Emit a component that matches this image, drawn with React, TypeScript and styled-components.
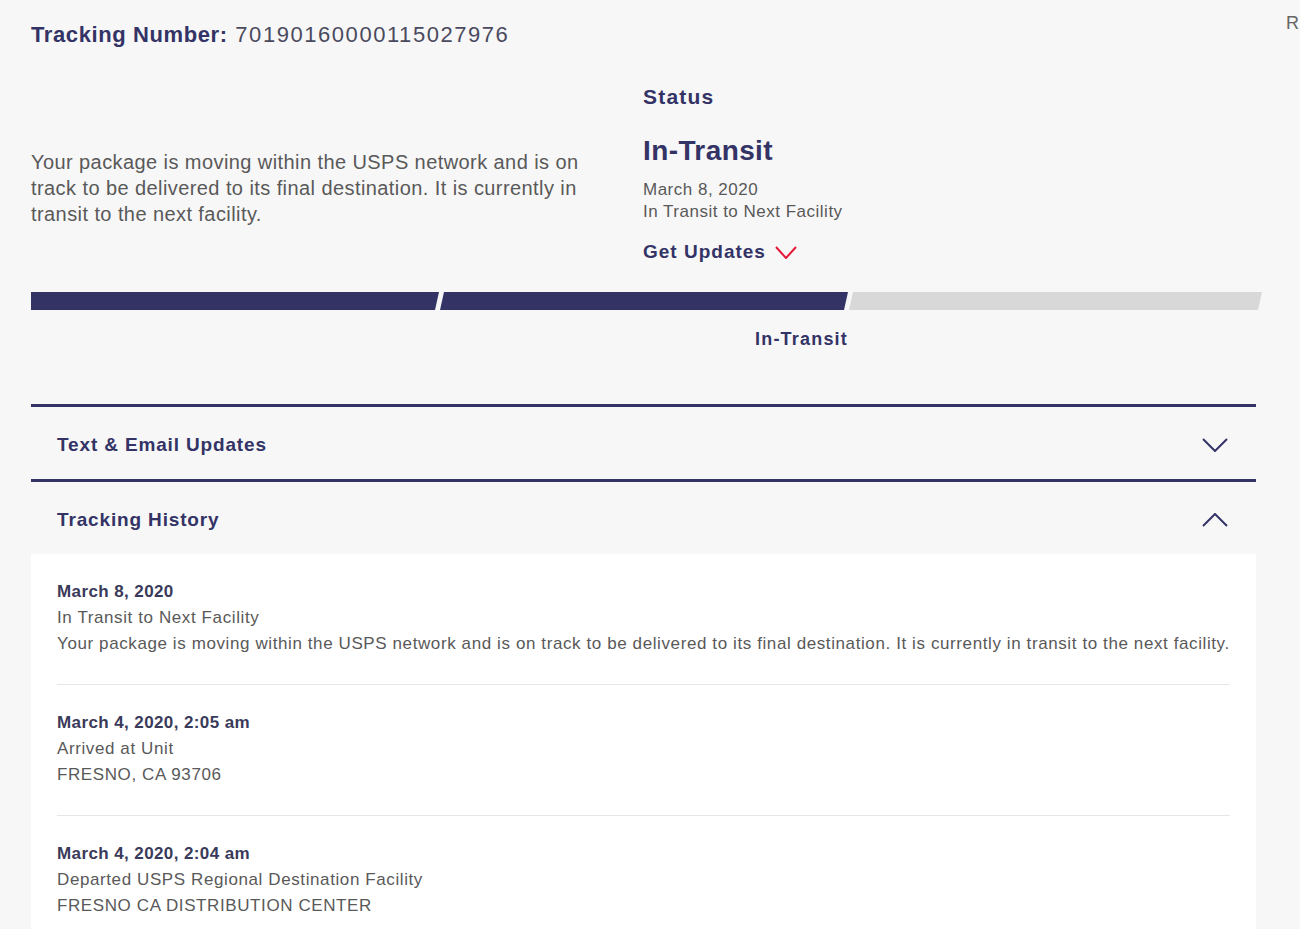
import React from "react";
import styled, { createGlobalStyle } from "styled-components";

const Global = createGlobalStyle`
  html, body { margin: 0; padding: 0; background: #f7f7f7; overflow: hidden; }
  body { font-family: "Liberation Sans", Arial, sans-serif; color: #595959; }
  * { box-sizing: border-box; }
`;

const NAVY = "#333366";

const Page = styled.div`
  display: flex;
  align-items: flex-start;
  padding-left: 31px;
  width: 1300px;
`;

const Main = styled.main`
  width: 1231px;
  flex: none;
`;

const Side = styled.aside`
  margin-left: 24px;
  padding-top: 12px;
  font-size: 18px;
  line-height: 22px;
  color: #666;
  white-space: nowrap;
`;

const TrackingTitle = styled.h1`
  margin: 22px 0 0;
  font-size: 22px;
  line-height: 26px;
  font-weight: normal;
  color: #4a4a5e;
  letter-spacing: 1.55px;
  b { color: ${NAVY}; font-weight: bold; letter-spacing: 0.6px; }
`;

const Summary = styled.section`
  display: grid;
  grid-template-columns: 612px 1fr;
  margin-top: 37px;
`;

const Description = styled.p`
  margin: 0;
  padding-top: 64px;
  width: 585px;
  font-size: 20px;
  line-height: 26px;
  letter-spacing: 0.42px;
  color: #595959;
`;

const StatusCol = styled.div`
  display: flex;
  flex-direction: column;
`;

const StatusLabel = styled.h3`
  margin: 0;
  font-size: 21px;
  line-height: 24px;
  font-weight: bold;
  letter-spacing: 1.2px;
  color: ${NAVY};
`;

const StatusValue = styled.h2`
  margin: 25px 0 0;
  font-size: 28px;
  line-height: 34px;
  font-weight: bold;
  letter-spacing: 0.4px;
  color: ${NAVY};
`;

const StatusMeta = styled.div`
  margin-top: 11px;
  font-size: 17px;
  line-height: 22px;
  letter-spacing: 0.5px;
  color: #595959;
`;

const UpdatesLink = styled.a`
  margin-top: 17px;
  display: inline-flex;
  align-items: center;
  gap: 9px;
  font-size: 19px;
  line-height: 24px;
  font-weight: bold;
  letter-spacing: 1px;
  color: ${NAVY};
  text-decoration: none;
  cursor: pointer;
`;

const Progress = styled.div`
  margin-top: 28px;
  display: grid;
  grid-template-columns: 408px 409px 414px;
  height: 18px;
`;

const Segment = styled.div<{ $filled: boolean; $first?: boolean }>`
  background: ${(p) => (p.$filled ? NAVY : "#d8d8d8")};
  clip-path: ${(p) =>
    p.$first
      ? "polygon(0 0, 100% 0, calc(100% - 4px) 100%, 0 100%)"
      : "polygon(4px 0, 100% 0, calc(100% - 4px) 100%, 0 100%)"};
  margin-left: ${(p) => (p.$first ? "0" : "1px")};
`;

const ProgressLabels = styled.div`
  margin-top: 18px;
  display: grid;
  grid-template-columns: 408px 409px 414px;
`;

const StepLabel = styled.div`
  grid-column: 2;
  text-align: right;
  font-size: 18px;
  line-height: 22px;
  font-weight: bold;
  letter-spacing: 1.2px;
  color: ${NAVY};
`;

const Accordion = styled.div`
  margin-top: 54px;
  width: 1225px;
`;

const AccItem = styled.div`
  border-top: 3px solid ${NAVY};
`;

const AccHeader = styled.button`
  width: 100%;
  height: 72px;
  display: flex;
  align-items: center;
  justify-content: space-between;
  padding: 3px 28px 0 26px;
  background: transparent;
  border: none;
  font-family: inherit;
  font-size: 19px;
  font-weight: bold;
  letter-spacing: 0.85px;
  color: ${NAVY};
  cursor: pointer;
  text-align: left;
`;

const Panel = styled.div`
  background: #ffffff;
  padding: 0 26px;
`;

const Entry = styled.div`
  padding: 25px 0 27px;
  border-bottom: 1px solid #e6e6e6;
  font-size: 17px;
  line-height: 26px;
  letter-spacing: 0.6px;
  color: #595959;
  &:last-child { border-bottom: none; }
`;

const EntryDate = styled.div`
  font-weight: bold;
  letter-spacing: 0.4px;
  color: #3a3a5a;
`;

const Chevron = ({ up, color, w, h }: { up?: boolean; color: string; w: number; h: number }) => (
  <svg width={w} height={h} viewBox={`0 0 ${w} ${h}`} fill="none">
    <path
      d={up ? `M1 ${h - 1} L${w / 2} 1 L${w - 1} ${h - 1}` : `M1 1 L${w / 2} ${h - 1} L${w - 1} 1`}
      stroke={color}
      strokeWidth={2}
    />
  </svg>
);

const history = [
  {
    date: "March 8, 2020",
    lines: [
      "In Transit to Next Facility",
      "Your package is moving within the USPS network and is on track to be delivered to its final destination. It is currently in transit to the next facility.",
    ],
  },
  { date: "March 4, 2020, 2:05 am", lines: ["Arrived at Unit", "FRESNO, CA 93706"] },
  {
    date: "March 4, 2020, 2:04 am",
    lines: ["Departed USPS Regional Destination Facility", "FRESNO CA DISTRIBUTION CENTER"],
  },
];

export default function App() {
  return (
    <>
      <Global />
      <Page>
        <Main>
          <TrackingTitle>
            <b>Tracking Number:</b> 70190160000115027976
          </TrackingTitle>
          <Summary>
            <Description>
              Your package is moving within the USPS network and is on track to be delivered to its final
              destination. It is currently in transit to the next facility.
            </Description>
            <StatusCol>
              <StatusLabel>Status</StatusLabel>
              <StatusValue>In-Transit</StatusValue>
              <StatusMeta>
                March 8, 2020
                <br />
                In Transit to Next Facility
              </StatusMeta>
              <div>
                <UpdatesLink>
                  Get Updates <Chevron color="#e31837" w={22} h={13} />
                </UpdatesLink>
              </div>
            </StatusCol>
          </Summary>
          <Progress>
            <Segment $filled $first />
            <Segment $filled />
            <Segment $filled={false} />
          </Progress>
          <ProgressLabels>
            <StepLabel>In-Transit</StepLabel>
          </ProgressLabels>
          <Accordion>
            <AccItem>
              <AccHeader>
                Text &amp; Email Updates
                <Chevron color={NAVY} w={26} h={14} />
              </AccHeader>
            </AccItem>
            <AccItem>
              <AccHeader>
                Tracking History
                <Chevron up color={NAVY} w={26} h={14} />
              </AccHeader>
              <Panel>
                {history.map((h) => (
                  <Entry key={h.date}>
                    <EntryDate>{h.date}</EntryDate>
                    {h.lines.map((l) => (
                      <div key={l}>{l}</div>
                    ))}
                  </Entry>
                ))}
              </Panel>
            </AccItem>
          </Accordion>
        </Main>
        <Side>R</Side>
      </Page>
    </>
  );
}
